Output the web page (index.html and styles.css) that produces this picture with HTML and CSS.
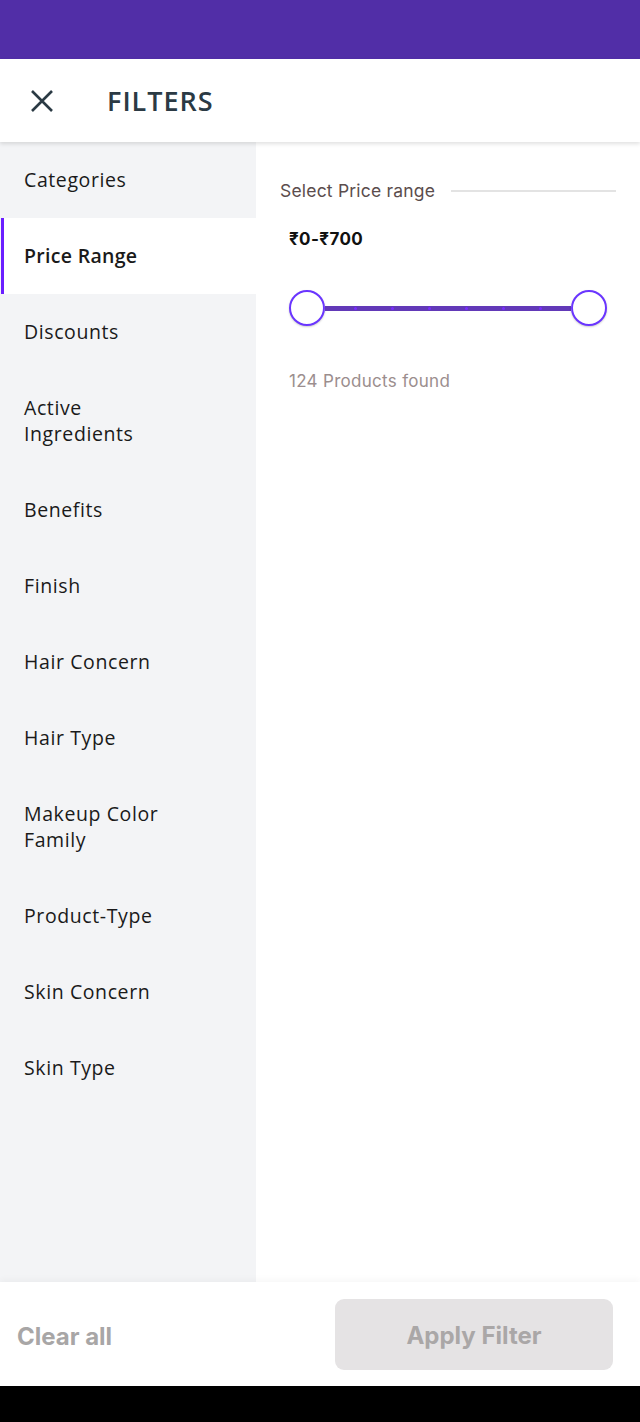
FILE: index.html
```html
<!DOCTYPE html>
<html lang="en">
<head>
  <meta charset="UTF-8">
  <meta name="viewport" content="width=device-width, initial-scale=1.0">
  <title>Filters</title>
  <link rel="stylesheet" href="styles.css">
</head>
<body>
  <div class="status-bar"></div>

  <header class="header">
    <button class="close-btn" aria-label="Close">
      <svg width="24" height="24" viewBox="0 0 24 24">
        <path d="M2 2 L22 22 M22 2 L2 22" stroke="#2b3a44" stroke-width="2.6" fill="none"/>
      </svg>
    </button>
    <h1 class="title">FILTERS</h1>
  </header>

  <main class="content">
    <nav class="sidebar">
      <div class="side-item">Categories</div>
      <div class="side-item active">Price Range</div>
      <div class="side-item">Discounts</div>
      <div class="side-item">Active<br>Ingredients</div>
      <div class="side-item">Benefits</div>
      <div class="side-item">Finish</div>
      <div class="side-item">Hair Concern</div>
      <div class="side-item">Hair Type</div>
      <div class="side-item">Makeup Color<br>Family</div>
      <div class="side-item">Product-Type</div>
      <div class="side-item">Skin Concern</div>
      <div class="side-item">Skin Type</div>
    </nav>

    <section class="panel">
      <div class="panel-head">
        <span class="panel-label">Select Price range</span>
        <span class="panel-line"></span>
      </div>
      <div class="price">₹0-₹700</div>
      <div class="slider">
        <span class="thumb"></span>
        <div class="track">
          <i></i><i></i><i></i><i></i><i></i><i></i>
        </div>
        <span class="thumb"></span>
      </div>
      <p class="found">124 Products found</p>
    </section>
  </main>

  <footer class="footer">
    <button class="clear-btn">Clear all</button>
    <button class="apply-btn">Apply Filter</button>
  </footer>

  <div class="nav-bar"></div>
</body>
</html>
```

FILE: styles.css
```css
body {
  margin: 0;
  padding: 0;
  width: 640px;
  height: 1422px;
  display: flex;
  flex-direction: column;
  font-family: "Open Sans", Arial, sans-serif;
  background-color: #fff;
  overflow: hidden;
}

.status-bar {
  height: 59px;
  background-color: #512ea7;
  flex-shrink: 0;
}

.header {
  height: 83px;
  display: flex;
  align-items: center;
  background-color: #fff;
  box-shadow: 0 2px 4px rgba(0, 0, 0, 0.12);
  position: relative;
  z-index: 2;
  flex-shrink: 0;
}

.close-btn {
  border: none;
  background: none;
  padding: 0;
  margin-left: 30px;
  width: 24px;
  height: 24px;
  display: flex;
}

.title {
  margin: 0 0 0 53px;
  font-size: 27px;
  font-weight: 600;
  color: #2b3a44;
  letter-spacing: 1px;
}

.content {
  flex: 1;
  display: flex;
}

.sidebar {
  width: 256px;
  background-color: #f3f4f6;
}

.side-item {
  padding: 25px 0 25px 24px;
  font-size: 19.5px;
  line-height: 26px;
  color: #1a1a1a;
  letter-spacing: 0.6px;
}

.side-item.active {
  background-color: #fff;
  font-weight: 600;
  letter-spacing: 0.3px;
  box-shadow: inset 3px 0 0 #6a1fff;
  margin-left: 1px;
  padding-left: 23px;
}

.panel {
  flex: 1;
  padding: 38px 24px 0 24px;
  font-family: Inter, "Open Sans", sans-serif;
}

.panel-head {
  display: flex;
  align-items: center;
  gap: 16px;
}

.panel-label {
  font-size: 17.5px;
  color: #5b4d4d;
  letter-spacing: 0.2px;
}

.panel-line {
  flex: 1;
  height: 2px;
  background-color: #e3e3e3;
}

.price {
  margin: 28px 0 0 9px;
  font-size: 17px;
  font-weight: 700;
  color: #111;
  letter-spacing: 0.4px;
}

.slider {
  margin: 41px 0 0 9px;
  width: 318px;
  display: flex;
  align-items: center;
}

.thumb {
  width: 32px;
  height: 32px;
  border: 2px solid #6a35ff;
  border-radius: 50%;
  background-color: #fff;
  box-shadow: 0 1px 2px rgba(0, 0, 0, 0.2);
  flex-shrink: 0;
}

.track {
  flex: 1;
  height: 5px;
  background-color: #6239b8;
  display: flex;
  justify-content: space-around;
  align-items: center;
  padding: 0 12px;
}

.track i {
  width: 3px;
  height: 3px;
  border-radius: 50%;
  background-color: #7a2cff;
}

.found {
  margin: 45px 0 0 9px;
  font-size: 17px;
  color: #9b8e8e;
  letter-spacing: 0.3px;
}

.footer {
  height: 104px;
  display: flex;
  align-items: center;
  justify-content: space-between;
  padding: 0 27px 0 17px;
  background-color: #fff;
  box-shadow: 0 -3px 6px rgba(0, 0, 0, 0.03);
  flex-shrink: 0;
}

.clear-btn {
  border: none;
  background: none;
  padding: 4px 0 0 0;
  font-family: Inter, "Open Sans", sans-serif;
  font-size: 24px;
  font-weight: 700;
  color: #a8a6a6;
}

.apply-btn {
  width: 278px;
  height: 71px;
  padding-top: 3px;
  border: none;
  border-radius: 9px;
  background-color: #e5e3e4;
  font-family: Inter, "Open Sans", sans-serif;
  font-size: 24px;
  font-weight: 700;
  color: #aaa7a7;
}

.nav-bar {
  height: 36px;
  background-color: #000;
  flex-shrink: 0;
}
```
